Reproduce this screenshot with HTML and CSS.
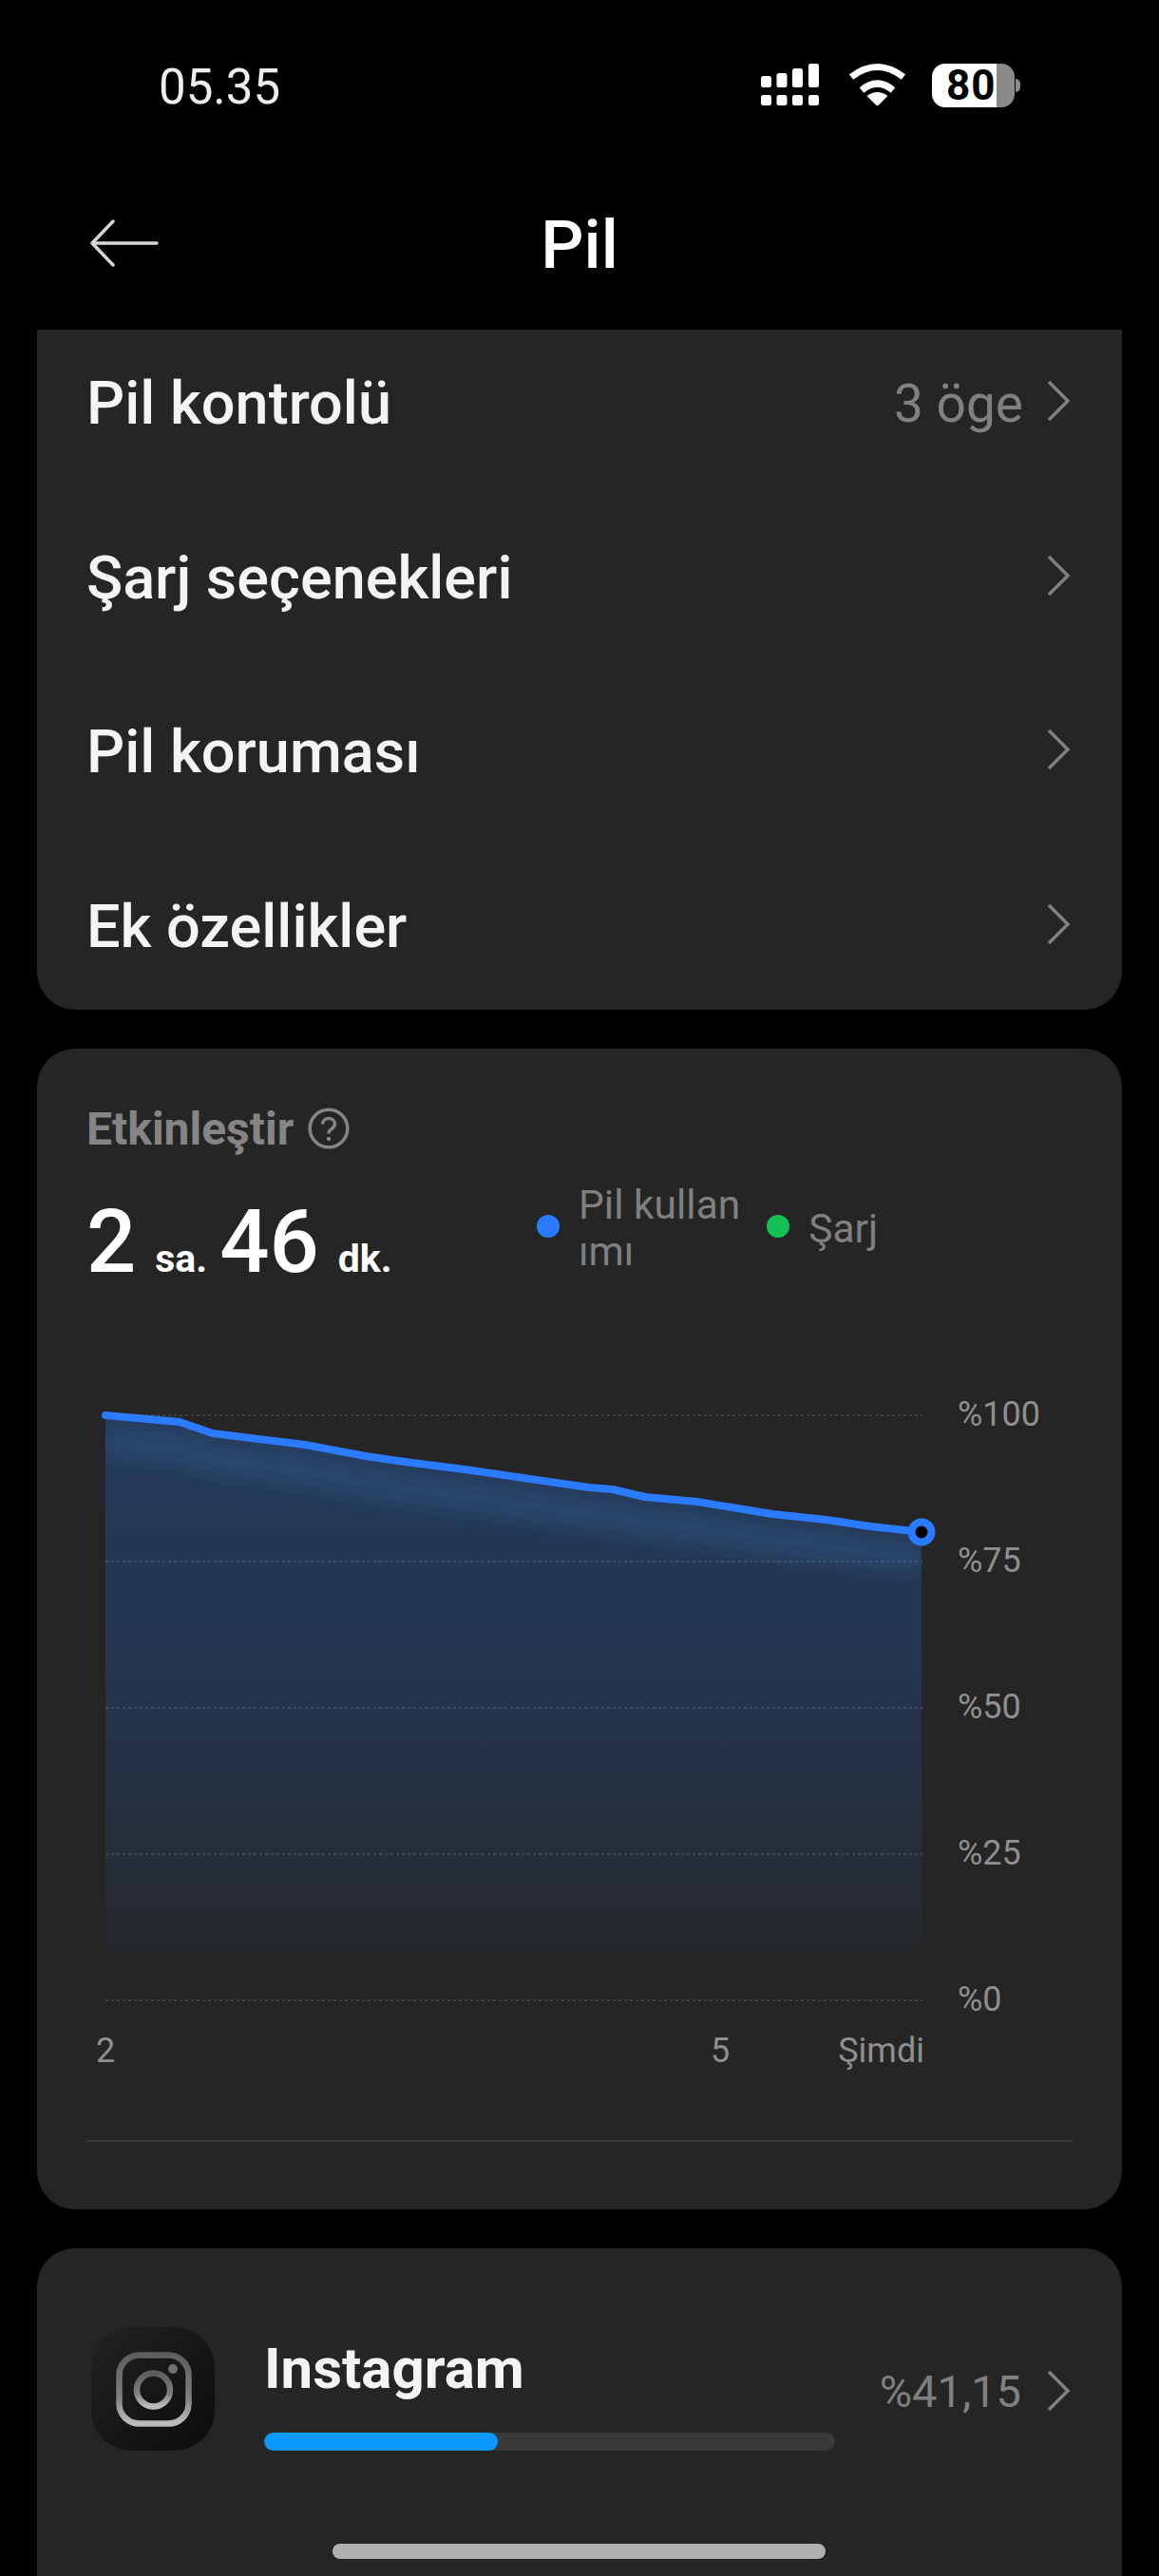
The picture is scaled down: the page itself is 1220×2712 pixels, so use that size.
FILE: index.html
```html
<!DOCTYPE html>
<html lang="tr">
<head>
  <meta charset="UTF-8" />
  <meta name="viewport" content="width=device-width, initial-scale=1.0"/>
  <title>Pil</title>
  <link rel="stylesheet" href="styles.css">
</head>
<body>
  <div class="screen">

    <!-- Status bar -->
    <div class="status-bar">
      <span class="time">05.35</span>
      <div class="status-icons">
        <svg class="signal" width="61" height="44" viewBox="0 0 61 44">
          <rect x="0" y="13" width="11" height="12" rx="2.5"/>
          <rect x="16.5" y="10" width="11" height="15" rx="2.5"/>
          <rect x="33" y="5" width="11" height="20" rx="2.5"/>
          <rect x="50" y="0" width="11" height="25" rx="2.5"/>
          <rect x="0" y="33" width="11" height="11" rx="2.5"/>
          <rect x="16.5" y="33" width="11" height="11" rx="2.5"/>
          <rect x="33" y="33" width="11" height="11" rx="2.5"/>
          <rect x="50" y="33" width="11" height="11" rx="2.5"/>
        </svg>
        <svg class="wifi" width="63" height="46" viewBox="0 0 63 46">
          <path d="M4 15 Q31.5 -6 59 15" />
          <path d="M15 29 Q31.5 15 48 29" />
          <path class="wifi-tip" d="M20.5 35 Q31.5 27 42.5 35 L33 44.5 Q31.5 46 30 44.5 Z" />
        </svg>
        <div class="battery">
          <div class="battery-body"><span>80</span></div>
          <div class="battery-nub"></div>
        </div>
      </div>
    </div>

    <!-- Title bar -->
    <div class="nav-bar">
      <svg class="back" width="73" height="50" viewBox="0 0 73 50">
        <path d="M71 25 H4 M25 2 L3 25 L25 48" />
      </svg>
      <h1>Pil</h1>
    </div>

    <!-- Settings list -->
    <div class="card list-card">
      <div class="row">
        <span class="row-label">Pil kontrolü</span>
        <span class="row-value">3 öge</span>
        <svg class="chevron" width="26" height="44" viewBox="0 0 26 44"><path d="M3 2 L23 22 L3 42"/></svg>
      </div>
      <div class="row">
        <span class="row-label">Şarj seçenekleri</span>
        <svg class="chevron" width="26" height="44" viewBox="0 0 26 44"><path d="M3 2 L23 22 L3 42"/></svg>
      </div>
      <div class="row">
        <span class="row-label">Pil koruması</span>
        <svg class="chevron" width="26" height="44" viewBox="0 0 26 44"><path d="M3 2 L23 22 L3 42"/></svg>
      </div>
      <div class="row">
        <span class="row-label">Ek özellikler</span>
        <svg class="chevron" width="26" height="44" viewBox="0 0 26 44"><path d="M3 2 L23 22 L3 42"/></svg>
      </div>
    </div>

    <!-- Usage chart -->
    <div class="card usage-card">
      <div class="usage-title">
        <span>Etkinleştir</span>
        <svg class="help" width="44" height="44" viewBox="0 0 44 44">
          <circle cx="22" cy="22" r="19.8"/>
          <path d="M15.5 17.5 C15.5 9.5 28.5 9.5 28.5 17.5 C28.5 22 22 22.5 22 27.5"/>
          <circle class="help-dot" cx="22" cy="33" r="2.2"/>
        </svg>
      </div>
      <div class="usage-head">
        <div class="duration">
          <span class="big">2</span><span class="unit">sa.</span><span class="big">46</span><span class="unit">dk.</span>
        </div>
        <div class="legend">
          <div class="legend-item">
            <i class="dot dot-blue"></i>
            <span>Pil kullan<br>ımı</span>
          </div>
          <div class="legend-item">
            <i class="dot dot-green"></i>
            <span>Şarj</span>
          </div>
        </div>
      </div>

      <!-- chart coordinates are page pixels, the group moves them into the svg -->
      <svg class="chart" width="1090" height="730" viewBox="0 0 1090 730">
        <defs>
          <linearGradient id="area" x1="0" y1="1490" x2="0" y2="2106" gradientUnits="userSpaceOnUse">
            <stop offset="0" stop-color="#243b5b"/>
            <stop offset="0.45" stop-color="#24354f"/>
            <stop offset="0.763" stop-color="#262d38"/>
            <stop offset="0.925" stop-color="#252729"/>
            <stop offset="1" stop-color="#252525"/>
          </linearGradient>
          <clipPath id="area-clip">
            <path d="M111 1490 L189 1497 L224 1509 L321 1521 L385 1533 L426 1539 L489 1547 L620 1566 L645 1568 L679 1576 L734 1581 L813 1594 L870 1600 L916 1607 L970 1613 V2106 H111 Z"/>
          </clipPath>
          <filter id="soft" x="-5%" y="-200%" width="110%" height="500%">
            <feGaussianBlur stdDeviation="10"/>
          </filter>
        </defs>

        <g transform="translate(-91 -1450)">
          <path fill="url(#area)" d="M111 1490 L189 1497 L224 1509 L321 1521 L385 1533 L426 1539 L489 1547 L620 1566 L645 1568 L679 1576 L734 1581 L813 1594 L870 1600 L916 1607 L970 1613 V2106 H111 Z"/>
          <g clip-path="url(#area-clip)">
            <path class="glow" filter="url(#soft)" d="M111 1518 L189 1525 L224 1537 L321 1549 L385 1561 L426 1567 L489 1575 L620 1594 L645 1596 L679 1604 L734 1609 L813 1622 L870 1628 L916 1635 L970 1641"/>
          </g>

          <line class="grid" x1="111" y1="1490" x2="971" y2="1490"/>
          <line class="grid" x1="111" y1="1644" x2="971" y2="1644"/>
          <line class="grid" x1="111" y1="1798" x2="971" y2="1798"/>
          <line class="grid" x1="111" y1="1952" x2="971" y2="1952"/>
          <line class="grid" x1="111" y1="2106" x2="971" y2="2106"/>

          <path class="trace" d="M111 1490 L189 1497 L224 1509 L321 1521 L385 1533 L426 1539 L489 1547 L620 1566 L645 1568 L679 1576 L734 1581 L813 1594 L870 1600 L916 1607 L962 1612"/>
          <circle class="trace-end" cx="970" cy="1613" r="10.5"/>

          <text class="axis" x="1008" y="1501">%100</text>
          <text class="axis" x="1008" y="1655">%75</text>
          <text class="axis" x="1008" y="1809">%50</text>
          <text class="axis" x="1008" y="1963">%25</text>
          <text class="axis" x="1008" y="2117">%0</text>

          <text class="axis" x="111" y="2171" text-anchor="middle">2</text>
          <text class="axis" x="758" y="2171" text-anchor="middle">5</text>
          <text class="axis" x="973" y="2171" text-anchor="end">Şimdi</text>
        </g>
      </svg>

      <div class="divider"></div>
    </div>

    <!-- Per app usage -->
    <div class="card apps-card">
      <div class="app-row">
        <svg class="app-icon" width="130" height="130" viewBox="0 0 130 130">
          <defs>
            <linearGradient id="tile" x1="0" y1="0" x2="1" y2="1">
              <stop offset="0" stop-color="#222222"/>
              <stop offset="1" stop-color="#0c0c0c"/>
            </linearGradient>
            <linearGradient id="glyph" x1="0" y1="0" x2="0" y2="1">
              <stop offset="0" stop-color="#5e5e5e"/>
              <stop offset="0.6" stop-color="#7d7d7d"/>
              <stop offset="1" stop-color="#bdbdbd"/>
            </linearGradient>
          </defs>
          <rect width="130" height="130" rx="42" fill="url(#tile)"/>
          <rect x="29.5" y="29.5" width="73" height="72" rx="21" class="glyph-line"/>
          <circle cx="65.5" cy="66" r="17.5" class="glyph-line"/>
          <circle cx="86" cy="44" r="5" fill="#707070"/>
        </svg>
        <div class="app-info">
          <div class="app-name">Instagram</div>
          <div class="bar"><div class="bar-fill" style="width: 41%"></div></div>
        </div>
        <span class="row-value app-value">%41,15</span>
        <svg class="chevron app-chevron" width="26" height="44" viewBox="0 0 26 44"><path d="M3 2 L23 22 L3 42"/></svg>
      </div>
    </div>

    <div class="home-bar"></div>
  </div>
</body>
</html>
```

FILE: styles.css
```css
* {
  box-sizing: border-box;
}

html, body {
  margin: 0;
  padding: 0;
  background: #000;
}

.screen {
  position: relative;
  width: 1220px;
  height: 2712px;
  overflow: hidden;
  background: #000;
  font-family: Roboto, "Noto Sans", sans-serif;
  color: #fff;
}

/* status bar */
.status-bar {
  height: 130px;
  padding: 0 146px 0 167px;
  display: flex;
  align-items: flex-start;
  justify-content: space-between;
}

.time {
  font-size: 51px;
  line-height: 56px;
  color: #eee;
  margin-top: 64px;
}

.status-icons {
  display: flex;
  align-items: flex-start;
  margin-top: 66px;
  height: 47px;
}

.signal {
  fill: #fff;
  margin-top: 1px;
}

.wifi {
  margin-left: 30px;
  fill: none;
  stroke: #fff;
  stroke-width: 7;
}

.wifi-tip {
  fill: #fff;
  stroke: none;
}

.battery {
  display: flex;
  align-items: center;
  margin-left: 26px;
  margin-top: 1px;
}

.battery-body {
  width: 87px;
  height: 46px;
  border-radius: 14px;
  background: linear-gradient(to right, #fff 78%, #8a8a8a 78%);
  padding-left: 15px;
  color: #000;
  font-size: 44px;
  letter-spacing: 1px;
  line-height: 46px;
  font-weight: 700;
}

.battery-nub {
  width: 5px;
  height: 14px;
  margin-left: 1px;
  border-radius: 0 7px 7px 0;
  background: #8a8a8a;
}

/* title bar */
.nav-bar {
  position: relative;
  height: 217px;
  padding: 101px 0 0 94px;
}

.back {
  display: block;
  fill: none;
  stroke: #d8d8d8;
  stroke-width: 3.5;
  stroke-linecap: round;
  stroke-linejoin: round;
}

.nav-bar h1 {
  position: absolute;
  left: 0;
  right: 0;
  top: 84px;
  margin: 0;
  text-align: center;
  font-size: 71px;
  line-height: 88px;
  font-weight: 500;
}

/* cards */
.card {
  margin: 0 39px;
  background: #252525;
  border-radius: 40px;
}

.list-card {
  height: 716px;
  padding-bottom: 12px;
  border-radius: 0 0 40px 40px;
  display: flex;
  flex-direction: column;
  gap: 29.5px;
}

.row {
  height: 154px;
  padding: 0 54px 0 52px;
  display: flex;
  align-items: center;
}

.row-label {
  flex: 1;
  font-size: 63px;
  font-weight: 500;
  color: #f4f4f4;
  margin-top: 2px;
}

.row-value {
  font-size: 55px;
  color: #808080;
  margin-right: 24px;
  margin-top: 2px;
}

.app-value {
  font-size: 47px;
  margin-right: 26px;
  margin-top: 5px;
}

.chevron {
  fill: none;
  stroke: #808080;
  stroke-width: 3.5;
  margin-top: -3px;
}

.app-chevron {
  margin-top: 3px;
}

/* usage card */
.usage-card {
  height: 1222px;
  margin-top: 41px;
  padding-top: 62px;
}

.usage-title {
  display: flex;
  align-items: center;
  gap: 15px;
  padding-left: 52px;
  height: 44px;
  font-size: 48px;
  font-weight: 700;
  color: #858585;
}

.help {
  fill: none;
  stroke: #858585;
  stroke-width: 3.5;
}

.help-dot {
  fill: #858585;
  stroke: none;
}

.usage-head {
  display: flex;
  align-items: flex-start;
  margin-top: 40px;
  padding-left: 52px;
  height: 106px;
}

.duration {
  width: 474px;
  padding-top: 10px;
  display: flex;
  align-items: baseline;
}

.big {
  font-size: 92px;
  font-weight: 500;
  line-height: 96px;
}

.unit {
  font-size: 41px;
  font-weight: 700;
  margin: 0 13px 0 20px;
}

.legend {
  display: flex;
  align-items: center;
  margin-top: -6px;
  font-size: 42.5px;
  line-height: 49px;
  color: #808080;
}

.legend-item {
  display: flex;
  align-items: center;
  gap: 20px;
  margin-right: 28px;
}

.dot {
  display: block;
  width: 24px;
  height: 24px;
  margin-top: -4px;
  border-radius: 50%;
}

.dot-blue {
  background: #2a7bff;
}

.dot-green {
  background: #12c255;
}

.chart {
  display: block;
  margin: 94px 0 0 52px;
}

.grid {
  stroke: #ffffff;
  stroke-opacity: 0.13;
  stroke-width: 2;
  stroke-dasharray: 3 3;
}

.glow {
  fill: none;
  stroke: #2a5687;
  stroke-opacity: 0.45;
  stroke-width: 30;
}

.trace {
  fill: none;
  stroke: #2a7bff;
  stroke-width: 8;
  stroke-linecap: round;
  stroke-linejoin: round;
}

.trace-end {
  fill: #000;
  stroke: #2a7bff;
  stroke-width: 8;
}

.axis {
  font-family: Roboto, sans-serif;
  font-size: 36px;
  fill: #8f8f8f;
}

.divider {
  height: 2px;
  margin: 73px 52px 0;
  background: #3a3a3a;
}

/* app list */
.apps-card {
  height: 500px;
  margin-top: 41px;
  padding-top: 83px;
}

.app-row {
  display: flex;
  align-items: center;
  padding: 0 54px 0 57px;
  height: 130px;
}

.app-icon {
  flex: none;
}

.glyph-line {
  fill: none;
  stroke: url(#glyph);
  stroke-width: 6.5;
}

.app-info {
  flex: none;
  width: 601px;
  margin: 0 auto 0 52px;
}

.app-name {
  font-size: 60px;
  font-weight: 700;
  line-height: 70px;
  color: #f4f4f4;
  margin-top: 8px;
}

.bar {
  height: 19px;
  margin-top: 32px;
  border-radius: 10px;
  background: #3a3a3a;
  overflow: hidden;
}

.bar-fill {
  height: 100%;
  border-radius: 10px;
  background: #0a98ff;
}

.home-bar {
  position: absolute;
  left: 350px;
  top: 2678px;
  width: 519px;
  height: 16px;
  border-radius: 8px;
  background: #b0b0b0;
}
```
